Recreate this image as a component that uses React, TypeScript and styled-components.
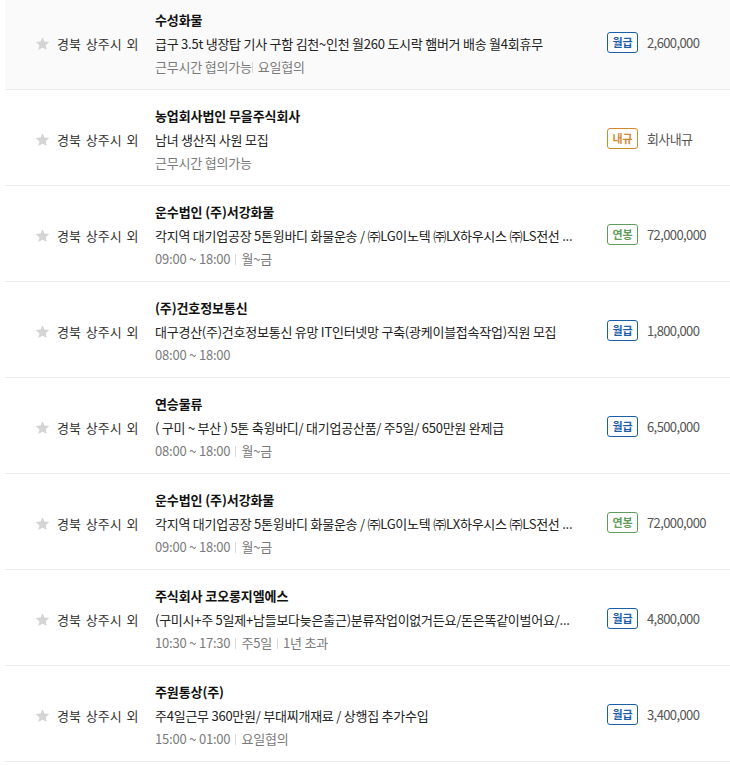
import React from "react";
import styled, { createGlobalStyle } from "styled-components";

const Global = createGlobalStyle`
  html, body { margin: 0; padding: 0; background: #fff; }
  body {
    font-family: "Noto Sans CJK KR", "Noto Sans", "Liberation Sans", sans-serif;
    color: #222;
    overflow: hidden;
  }
`;

type PayType = "month" | "rule" | "year";

const payColors: Record<PayType, string> = {
  month: "#1c5ea8",
  rule: "#d2882e",
  year: "#5f9c5c",
};

const List = styled.ul`
  list-style: none;
  margin: -6px 0 0 5px;
  padding: 0;
`;

const Row = styled.li<{ $active?: boolean }>`
  display: grid;
  grid-template-columns: 150px 1fr 123px;
  height: 95px;
  border-bottom: 1px solid #ebebeb;
  background: ${(p) => (p.$active ? "#fafafa" : "#fff")};
`;

const Place = styled.div`
  display: flex;
  align-items: center;
  gap: 7px;
  padding: 3px 0 0 30px;
  font-size: 13px;
  word-spacing: 2px;
  color: #333;
  white-space: nowrap;
`;

const Content = styled.div`
  display: flex;
  flex-direction: column;
  padding-top: 14px;
  min-width: 0;
`;

const Title = styled.div`
  font-size: 13px;
  font-weight: 700;
  line-height: 23px;
  letter-spacing: -0.1px;
  color: #111;
`;

const Desc = styled.div`
  margin-top: 2px;
  font-size: 13px;
  line-height: 22px;
  letter-spacing: -0.25px;
  color: #222;
  white-space: nowrap;
`;

const Meta = styled.div`
  margin-top: 1px;
  display: flex;
  align-items: center;
  font-size: 13px;
  line-height: 22px;
  letter-spacing: -0.2px;
  color: #7a7a7a;
  white-space: nowrap;
`;

const MetaItem = styled.span<{ $tight?: boolean }>`
  display: inline-flex;
  align-items: center;
  & + &::before {
    content: "";
    display: inline-block;
    width: 1px;
    height: 11px;
    background: #d9d9d9;
    margin: 0 ${(p) => (p.$tight ? "5px 0 0" : "5px")};
  }
`;

const Pay = styled.div`
  display: flex;
  align-items: center;
  gap: 9px;
  padding-top: 1px;
`;

const Badge = styled.span<{ $type: PayType }>`
  display: inline-flex;
  align-items: center;
  justify-content: center;
  box-sizing: border-box;
  width: 31px;
  height: 21px;
  border: 1px solid ${(p) => payColors[p.$type]};
  border-radius: 3px;
  font-size: 11px;
  font-weight: 700;
  color: ${(p) => payColors[p.$type]};
  background: #fff;
`;

const Amount = styled.span`
  font-size: 13px;
  letter-spacing: -0.6px;
  color: #555;
`;

const Star = () => (
  <svg width="15" height="15" viewBox="0 0 24 24" aria-hidden="true">
    <path
      d="M12 1.8l3.1 7.1 7.7.7-5.8 5.1 1.7 7.5L12 18.3l-6.7 3.9L7 14.7 1.2 9.6l7.7-.7z"
      fill="#d4d4d4"
    />
  </svg>
);

type Job = {
  title: string;
  desc: string;
  meta: string[];
  tight?: boolean;
  pay: PayType;
  amount: string;
  active?: boolean;
};

const badgeLabel: Record<PayType, string> = {
  month: "월급",
  rule: "내규",
  year: "연봉",
};

const jobs: Job[] = [
  {
    title: "수성화물",
    desc: "급구 3.5t 냉장탑 기사 구함 김천~인천 월260 도시락 햄버거 배송 월4회휴무",
    meta: ["근무시간 협의가능", "요일협의"],
    tight: true,
    pay: "month",
    amount: "2,600,000",
    active: true,
  },
  {
    title: "농업회사법인 무을주식회사",
    desc: "남녀 생산직 사원 모집",
    meta: ["근무시간 협의가능"],
    pay: "rule",
    amount: "회사내규",
  },
  {
    title: "운수법인 (주)서강화물",
    desc: "각지역 대기업공장 5톤윙바디 화물운송 / ㈜LG이노텍 ㈜LX하우시스 ㈜LS전선 ...",
    meta: ["09:00 ~ 18:00", "월~금"],
    pay: "year",
    amount: "72,000,000",
  },
  {
    title: "(주)건호정보통신",
    desc: "대구경산(주)건호정보통신 유망 IT인터넷망 구축(광케이블접속작업)직원 모집",
    meta: ["08:00 ~ 18:00"],
    pay: "month",
    amount: "1,800,000",
  },
  {
    title: "연승물류",
    desc: "( 구미 ~ 부산 ) 5톤 축윙바디/ 대기업공산품/ 주5일/ 650만원 완제급",
    meta: ["08:00 ~ 18:00", "월~금"],
    pay: "month",
    amount: "6,500,000",
  },
  {
    title: "운수법인 (주)서강화물",
    desc: "각지역 대기업공장 5톤윙바디 화물운송 / ㈜LG이노텍 ㈜LX하우시스 ㈜LS전선 ...",
    meta: ["09:00 ~ 18:00", "월~금"],
    pay: "year",
    amount: "72,000,000",
  },
  {
    title: "주식회사 코오롱지엘에스",
    desc: "(구미시+주 5일제+남들보다늦은출근)분류작업이없거든요/돈은똑같이벌어요/...",
    meta: ["10:30 ~ 17:30", "주5일", "1년 초과"],
    pay: "month",
    amount: "4,800,000",
  },
  {
    title: "주원통상(주)",
    desc: "주4일근무 360만원/ 부대찌개재료 / 상행집 추가수입",
    meta: ["15:00 ~ 01:00", "요일협의"],
    pay: "month",
    amount: "3,400,000",
  },
];

export default function App() {
  return (
    <>
      <Global />
      <List>
        {jobs.map((job, i) => (
          <Row key={i} $active={job.active}>
            <Place>
              <Star />
              경북 상주시 외
            </Place>
            <Content>
              <Title>{job.title}</Title>
              <Desc>{job.desc}</Desc>
              <Meta>
                {job.meta.map((m, j) => (
                  <MetaItem key={j} $tight={job.tight}>
                    {m}
                  </MetaItem>
                ))}
              </Meta>
            </Content>
            <Pay>
              <Badge $type={job.pay}>{badgeLabel[job.pay]}</Badge>
              <Amount>{job.amount}</Amount>
            </Pay>
          </Row>
        ))}
      </List>
    </>
  );
}
